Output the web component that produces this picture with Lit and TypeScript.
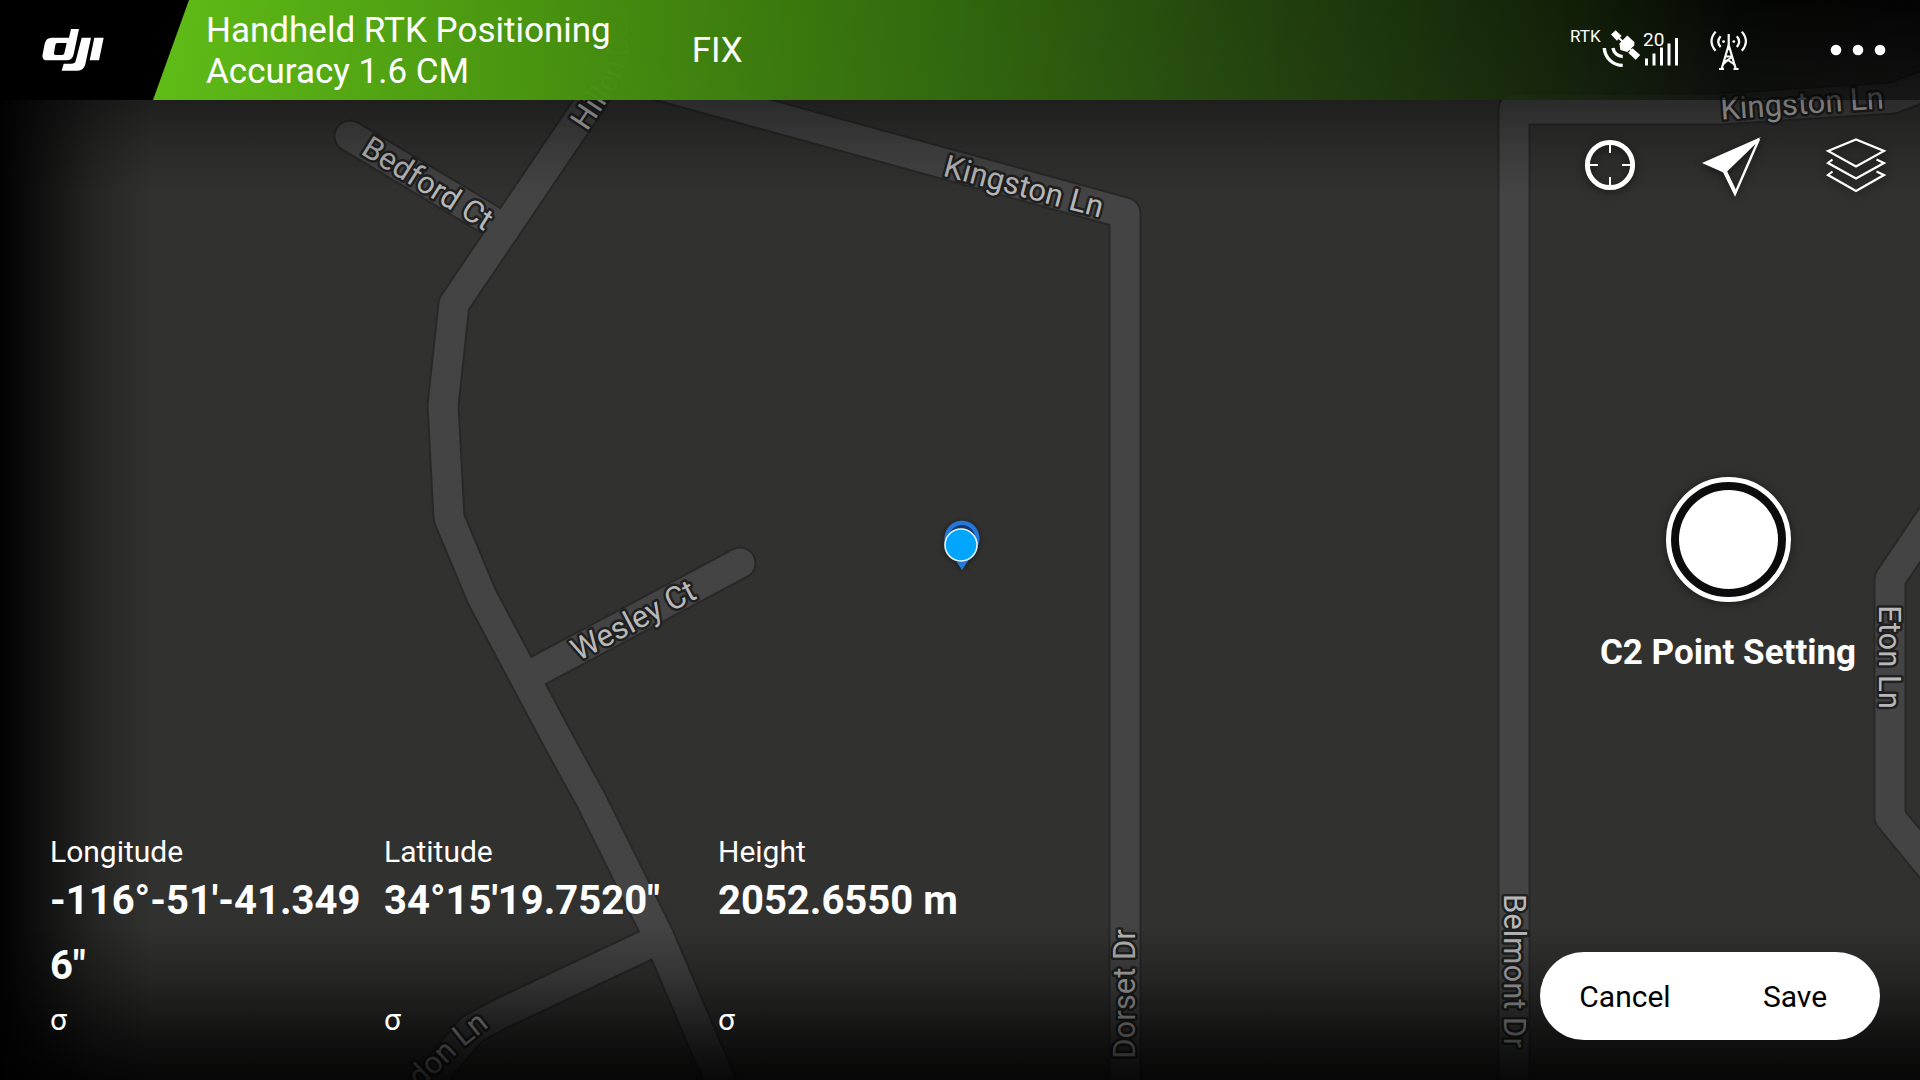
import { LitElement, html, svg, css } from "lit";
import { customElement } from "lit/decorators.js";

interface Reading {
  name: string;
  value: string;
}

interface RoadLabel {
  text: string;
  x: number;
  y: number;
  angle: number;
}

const READINGS: Reading[] = [
  { name: "Longitude", value: `-116°-51'-41.3496"` },
  { name: "Latitude", value: `34°15'19.7520"` },
  { name: "Height", value: "2052.6550 m" },
];

const ROADS: string[] = [
  "M350 136 L505 229",
  "M740 563 L530 675",
  "M655 941 L500 1014 L472 1029 L420 1090",
  "M618 -20 V40 Q616 62 592 100 L454 304 L443 405 L449 518 L482 597 L558 740 L591 800 L658 935 L724 1090",
  "M590 66 L1125 213 V1100",
  "M1514 1100 V109 L1720 109 L1893 98 L1940 80",
  "M1940 505 L1890 579 V817 L1940 878",
];

const LABELS: RoadLabel[] = [
  { text: "Bedford Ct", x: 428, y: 183, angle: 32 },
  { text: "Kingston Ln", x: 1024, y: 186, angle: 15 },
  { text: "Wesley Ct", x: 633, y: 620, angle: -28 },
  { text: "Dorset Dr", x: 1124, y: 994, angle: -90 },
  { text: "Belmont Dr", x: 1515, y: 971, angle: 90 },
  { text: "Eton Ln", x: 1890, y: 657, angle: 90 },
  { text: "Kingston Ln", x: 1802, y: 103, angle: -4 },
];

@customElement("rtk-map")
export class RtkMap extends LitElement {
  static styles = css`
    :host {
      display: block;
      overflow: hidden;
      background: #313130;
    }
    .canvas {
      display: block;
      width: 100%;
      height: 100%;
    }
    .casing,
    .road {
      fill: none;
      stroke-linejoin: round;
      stroke-linecap: round;
    }
    .casing {
      stroke: #282828;
      stroke-width: 33px;
    }
    .road {
      stroke: #444444;
      stroke-width: 29px;
    }
    .label {
      font: 31px Roboto, sans-serif;
      fill: #b8b8b8;
      stroke: #202020;
      stroke-width: 5px;
      stroke-linejoin: round;
      paint-order: stroke;
    }
    .centred {
      text-anchor: middle;
    }
  `;

  render() {
    return html`
      <svg class="canvas" viewBox="0 0 1920 1080" preserveAspectRatio="xMidYMid slice" role="img" aria-label="Map">
        <defs>
          <path id="hillen" d="M587 132 L616 88 Q629 66 629 42 V-90" />
          <path id="don" d="M420 1089 L464 1047 L500 1018" />
          <filter id="soft" x="-50%" y="-50%" width="200%" height="200%">
            <feDropShadow dx="0" dy="1" stdDeviation="3" flood-color="#000" flood-opacity="0.5" />
          </filter>
        </defs>
        ${ROADS.map((d) => svg`<path class="casing" d=${d} />`)}
        ${ROADS.map((d) => svg`<path class="road" d=${d} />`)}
        ${LABELS.map(
          (l) => svg`<text class="label centred" y="11" transform="translate(${l.x} ${l.y}) rotate(${l.angle})">${l.text}</text>`
        )}
        <text class="label"><textPath href="#hillen">Hillen Dal</textPath></text>
        <text class="label"><textPath href="#don">don Ln</textPath></text>
        <g filter="url(#soft)">
          <path d="M962 570 L949 550 A17.5 17.5 0 1 1 975 550 Z" fill="#2577da" />
          <circle cx="962" cy="538" r="13" fill="#12386f" />
          <circle cx="961" cy="545" r="16" fill="#03a5fe" stroke="#eef8ff" stroke-width="1.5" />
        </g>
      </svg>
    `;
  }
}

@customElement("rtk-header")
export class RtkHeader extends LitElement {
  static styles = css`
    :host {
      display: flex;
      align-items: center;
      height: 100px;
      color: #fff;
      font-family: Roboto, sans-serif;
      background: linear-gradient(
        95deg,
        #60bd17 8%,
        rgba(70, 144, 15, 0.96) 32%,
        rgba(51, 108, 14, 0.94) 50%,
        rgba(36, 70, 14, 0.88) 67%,
        rgba(22, 42, 9, 0.8) 80%,
        rgba(4, 7, 3, 0.6) 90%,
        rgba(0, 0, 0, 0.45) 100%
      );
    }
    .brand {
      display: flex;
      align-items: center;
      align-self: stretch;
      box-sizing: border-box;
      width: 189px;
      padding-left: 42px;
      background: #000;
      clip-path: polygon(0 0, 100% 0, 153px 100%, 0 100%);
    }
    .title {
      margin: 0 0 0 17px;
      padding-top: 2px;
      font-size: 35px;
      line-height: 41px;
      font-weight: 400;
    }
    .line {
      display: block;
    }
    .fix {
      margin-left: 81px;
      font-size: 35px;
      line-height: 41px;
    }
    .status {
      display: flex;
      align-items: center;
      margin-left: auto;
      padding-right: 34px;
    }
    .antenna {
      margin-left: 28px;
      margin-right: 80px;
    }
    .more {
      display: flex;
      padding: 0;
      border: 0;
      background: none;
      cursor: pointer;
    }
    svg {
      display: block;
      fill: #fff;
    }
    .stroke {
      fill: none;
      stroke: #fff;
    }
    .tag {
      font: 17px Roboto, sans-serif;
    }
    .count {
      font: 19px Roboto, sans-serif;
    }
  `;

  render() {
    return html`
      <div class="brand">
        <svg width="62" height="42" viewBox="38 28 186 126" role="img" aria-label="DJI">
          <path
            fill-rule="evenodd"
            d="M125 28 H149 L133 104 Q129 122 112 122 H56 Q36 122 40 104 L46 72 Q50 54 67 54 H119 Z M84 70 Q79 70 78 76 L74 100 Q73 106 79 106 H98 Q104 106 105 101 L112 70 Z"
          />
          <path d="M157 54 H185 L168 134 Q163 153 145 153 H97 L103 132 H126 Q137 132 139 124 Z" />
          <path d="M195 54 H223 L209 122 H181 Z" />
        </svg>
      </div>
      <h1 class="title">
        <span class="line">Handheld RTK Positioning</span>
        <span class="line">Accuracy 1.6 CM</span>
      </h1>
      <span class="fix">FIX</span>
      <div class="status">
        <svg width="110" height="48" viewBox="0 -1 110 48" role="img" aria-label="RTK satellites">
          <text class="tag" x="0" y="15">RTK</text>
          <path d="M41 7.6 L45.6 3.2 L51.6 9 L47 13.8 Z" />
          <path d="M49.4 16.4 L57.3 8.6 L64.3 15 V18.6 L57.3 25 L50.4 23 Z" />
          <path d="M48 10 L66 28" class="stroke" stroke-width="2" />
          <path d="M62.5 21.2 L70.2 28 L65.7 32.8 L58.2 25.8 Z" />
          <path class="stroke" stroke-width="3.4" d="M34.3 21 A18.4 18.4 0 0 0 52.7 38.4" />
          <path class="stroke" stroke-width="3.4" d="M43 21 A10 10 0 0 0 52.7 29.6" />
          <text class="count" x="73" y="19">20</text>
          <path d="M75 31.5h3v7h-3z M82.5 26.5h3v12h-3z M90 20.5h3v18h-3z M97.5 16.5h3v22h-3z M105 11h3v27.5h-3z" />
        </svg>
        <svg class="antenna" width="42" height="42" viewBox="0 0 42 42" role="img" aria-label="Base station">
          <g class="stroke" stroke-width="2.2">
            <path d="M20.7 5 V21" />
            <path d="M20.7 16 L13.6 40 M20.7 16 L27.8 40" />
            <path stroke-width="1.8" d="M17.4 27.5 H24 M16 33 L24.5 28 M15.5 35 L20 31 L27 36" />
            <path d="M11 40 h5 M25.5 40 h5" />
            <path d="M12.6 7.3 Q8 12.7 12.6 18 M28.8 7.3 Q33.4 12.7 28.8 18" />
            <path d="M7.6 2.6 Q-0.6 12.3 7.6 21.8 M33.8 2.6 Q42 12.3 33.8 21.8" />
          </g>
          <circle cx="15.6" cy="12.6" r="1.4" />
          <circle cx="25.8" cy="12.6" r="1.4" />
        </svg>
        <button class="more" aria-label="More">
          <svg width="56" height="12" viewBox="0 0 56 12">
            <circle cx="6" cy="6" r="5.3" />
            <circle cx="28" cy="6" r="5.3" />
            <circle cx="50" cy="6" r="5.3" />
          </svg>
        </button>
      </div>
    `;
  }
}

@customElement("rtk-readouts")
export class RtkReadouts extends LitElement {
  static styles = css`
    :host {
      display: block;
      color: #fff;
      font-family: Roboto, sans-serif;
    }
    .list {
      display: flex;
      flex-wrap: wrap;
      margin: 0;
    }
    .item {
      display: flex;
      flex-direction: column;
      box-sizing: border-box;
      width: 334px;
      padding-right: 16px;
    }
    .name,
    .sigma {
      margin: 0;
      font-size: 30px;
      line-height: 32px;
    }
    .value {
      margin: 0;
      font-size: 40px;
      line-height: 65px;
      font-weight: 700;
      word-break: break-all;
    }
    .sigma {
      margin-top: auto;
      padding-top: 6px;
    }
  `;

  render() {
    return html`
      <dl class="list">
        ${READINGS.map(
          (r) => html`
            <div class="item">
              <dt class="name">${r.name}</dt>
              <dd class="value">${r.value}</dd>
              <dd class="sigma">σ</dd>
            </div>
          `
        )}
      </dl>
    `;
  }
}

@customElement("app-root")
export class AppRoot extends LitElement {
  static styles = css`
    :host {
      display: grid;
      grid-template-rows: auto 1fr;
      position: relative;
      min-height: 100vh;
      overflow: hidden;
      background: #313130;
      color: #fff;
      font-family: Roboto, sans-serif;
    }
    .map,
    .shade {
      position: absolute;
      inset: 0;
    }
    .shade {
      pointer-events: none;
      background: linear-gradient(
          to bottom,
          rgba(0, 0, 0, 0.9) 0,
          rgba(0, 0, 0, 0.4) 95px,
          rgba(0, 0, 0, 0.15) 150px,
          transparent 195px
        ),
        linear-gradient(
          to top,
          rgba(0, 0, 0, 0.88) 0,
          rgba(0, 0, 0, 0.66) 40px,
          rgba(0, 0, 0, 0.26) 100px,
          transparent 155px
        ),
        linear-gradient(
          to right,
          rgba(0, 0, 0, 0.97) 0,
          rgba(0, 0, 0, 0.68) 40px,
          rgba(0, 0, 0, 0.25) 95px,
          transparent 150px
        );
    }
    .header,
    .main {
      position: relative;
    }
    .main {
      display: grid;
      grid-template-columns: 1fr 384px;
    }
    .readouts {
      align-self: end;
      padding: 0 0 44px 50px;
    }
    .side {
      display: flex;
      flex-direction: column;
      justify-content: space-between;
      padding: 33px 0 40px;
    }
    .tools {
      display: flex;
      justify-content: flex-end;
      gap: 59px;
      padding-right: 32px;
    }
    .tool {
      width: 64px;
      height: 64px;
      padding: 0;
      border: 0;
      background: none;
      cursor: pointer;
    }
    .tool svg {
      display: block;
      overflow: visible;
      fill: none;
      stroke: #fff;
      filter: drop-shadow(0 2px 4px rgba(0, 0, 0, 0.55));
    }
    .capture {
      display: flex;
      flex-direction: column;
      align-items: center;
      gap: 31px;
    }
    .shutter {
      width: 125px;
      height: 125px;
      padding: 8px;
      border: 5px solid #fff;
      border-radius: 50%;
      background: #0c0c0c;
      box-shadow: 0 1px 10px rgba(0, 0, 0, 0.5);
      cursor: pointer;
    }
    .knob {
      display: block;
      width: 100%;
      height: 100%;
      border-radius: 50%;
      background: #fff;
    }
    .caption {
      font-size: 35px;
      line-height: 40px;
      font-weight: 700;
      white-space: nowrap;
    }
    .actions {
      display: flex;
      align-self: flex-end;
      width: 340px;
      margin-right: 40px;
      border-radius: 44px;
      overflow: hidden;
      background: #fff;
    }
    .action {
      flex: 1;
      height: 88px;
      padding: 0;
      border: 0;
      background: none;
      color: #000;
      font: 30px Roboto, sans-serif;
      cursor: pointer;
    }
  `;

  render() {
    return html`
      <rtk-map class="map"></rtk-map>
      <div class="shade"></div>
      <rtk-header class="header"></rtk-header>
      <main class="main">
        <rtk-readouts class="readouts"></rtk-readouts>
        <div class="side">
          <div class="tools">
            <button class="tool" aria-label="Centre the map">
              <svg width="64" height="64" viewBox="0 0 64 64">
                <circle cx="32" cy="32" r="22.6" stroke-width="5" />
                <path stroke-width="2" d="M32 11 V20 M32 44 V53 M11 32 H20 M44 32 H53" />
              </svg>
            </button>
            <button class="tool" aria-label="Orient the map">
              <svg width="64" height="64" viewBox="0 0 64 64">
                <path fill="#fff" stroke="none" d="M1 30 L60 4 L23.5 40 Z" />
                <path stroke-width="2.4" d="M23.5 39.5 L34 61 L58 6 Z" />
                <path fill="#fff" stroke="none" d="M22 38 L26 38 L35.5 58 L34 62 Z" />
              </svg>
            </button>
            <button class="tool" aria-label="Map layers">
              <svg width="64" height="64" viewBox="0 0 64 64">
                <g stroke-width="2.2">
                  <path d="M4 18 L32 6.5 L60 18 L32 33.5 Z" />
                  <path d="M8.5 26.5 L4 30 L32 45.5 L60 30 L52.5 26.5" />
                  <path d="M8.5 38.5 L4 42 L32 58 L60 42 L52.5 38.5" />
                </g>
              </svg>
            </button>
          </div>
          <div class="capture">
            <button class="shutter" aria-labelledby="caption"><span class="knob"></span></button>
            <span class="caption" id="caption">C2 Point Setting</span>
          </div>
          <div class="actions">
            <button class="action">Cancel</button>
            <button class="action">Save</button>
          </div>
        </div>
      </main>
    `;
  }
}
